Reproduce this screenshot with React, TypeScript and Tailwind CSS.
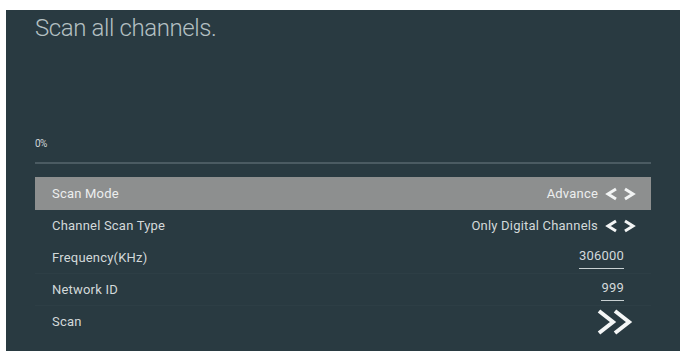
import React from "react";

const LeftRight: React.FC = () => (
  <svg width="31" height="14" viewBox="0 0 31 14" className="ml-[7px]">
    <path d="M11 2 L3 7 L11 12" fill="none" stroke="#f2f4f4" strokeWidth="3" strokeLinejoin="miter" />
    <path d="M20 2 L28 7 L20 12" fill="none" stroke="#f2f4f4" strokeWidth="3" strokeLinejoin="miter" />
  </svg>
);

const DoubleChevron: React.FC = () => (
  <svg width="40" height="28" viewBox="0 0 40 28">
    <path d="M3 3 L17 14 L3 25" fill="none" stroke="#f4f6f6" strokeWidth="4" />
    <path d="M19 3 L33 14 L19 25" fill="none" stroke="#f4f6f6" strokeWidth="4" />
  </svg>
);

interface RowProps {
  label: string;
  children: React.ReactNode;
  active?: boolean;
  line?: boolean;
}

const Row: React.FC<RowProps> = ({ label, children, active, line }) => (
  <div
    className={
      active
        ? "flex h-[33px] items-center justify-between bg-[#8d8f8f] pl-[17px] pr-[15px] text-[#eceeee]"
        : line
        ? "flex h-[32px] items-center justify-between border-b border-[#2d3e45] pl-[17px] pr-[15px] text-[#d3d9da]"
        : "flex h-[32px] items-center justify-between pl-[17px] pr-[15px] text-[#d3d9da]"
    }
  >
    <span className="tracking-[0.2px]">{label}</span>
    <div className="flex items-center">{children}</div>
  </div>
);

const App: React.FC = () => {
  return (
    <div className="h-[351px] w-[684px] overflow-hidden bg-white pl-[6px] pr-[4px] pt-[10px] font-['Roboto',sans-serif]">
      <div className="h-[360px] bg-[#293a41] px-[29px]">
        <h1 className="pt-[4px] text-[24px] font-light leading-[28px] tracking-[-0.4px] text-[#b4c0c3]">
          Scan all channels.
        </h1>
        <div className="mt-[95px] text-[10px] leading-[14px] tracking-[-0.5px] text-[#d0d6d8]">0%</div>
        <div className="mt-[11px] h-[2px] bg-[#4b5b62]"></div>
        <div className="mt-[13px] text-[13px]">
          <Row label="Scan Mode" active>
            <span className="tracking-[0.2px]">Advance</span>
            <LeftRight />
          </Row>
          <Row label="Channel Scan Type">
            <span className="tracking-[0.2px]">Only Digital Channels</span>
            <LeftRight />
          </Row>
          <Row label="Frequency(KHz)" line>
            <span className="mr-[12px] border-b border-[#c8d0d2] pb-[2px] tracking-[0.2px]">306000</span>
          </Row>
          <Row label="Network ID" line>
            <span className="mr-[12px] border-b border-[#c8d0d2] pb-[2px] tracking-[0.2px]">999</span>
          </Row>
          <Row label="Scan">
            <DoubleChevron />
          </Row>
        </div>
      </div>
    </div>
  );
};

export default App;
